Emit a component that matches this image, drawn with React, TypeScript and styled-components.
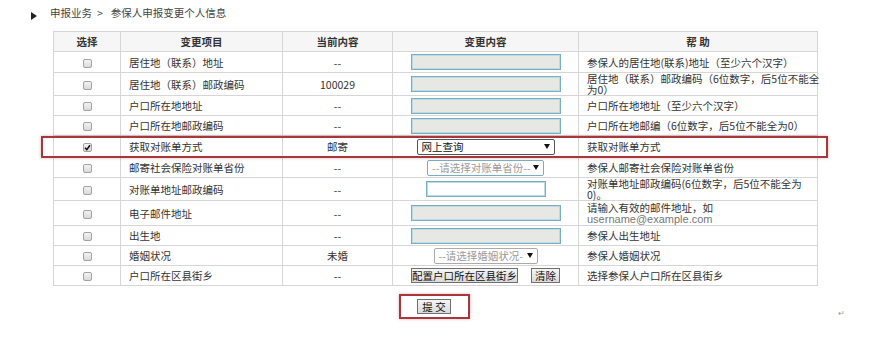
import React from "react";
import styled, { createGlobalStyle } from "styled-components";

const GlobalStyle = createGlobalStyle`
  html, body { margin: 0; padding: 0; background: #fff; }
  body { font-family: "Noto Sans CJK SC", "Noto Sans", sans-serif; color: #333; }
`;

const Page = styled.div`
  width: 871px;
  height: 337px;
  overflow: hidden;
`;

const Crumb = styled.div`
  display: flex;
  align-items: center;
  height: 14px;
  margin-top: 6px;
  padding-left: 31px;
  font-size: 10.5px;
  line-height: 14px;
  color: #444;
`;

const CrumbArrow = styled.span`
  width: 0;
  height: 0;
  border-left: 6px solid #222;
  border-top: 4px solid transparent;
  border-bottom: 4px solid transparent;
  margin: 6px 13px 0 0;
`;

const CrumbSep = styled.span`
  margin: 0 8px 0 5px;
`;

const TableWrap = styled.div`
  position: relative;
  margin: 11px 0 0 53px;
  width: 764px;
`;

const Table = styled.table`
  border-collapse: collapse;
  width: 764px;
  table-layout: fixed;
  font-size: 10.5px;
  line-height: 11px;
  color: #333;
`;

const Th = styled.th`
  height: 19px;
  padding: 0;
  border: 1px solid #d6d6d6;
  background: #f6f6f6;
  font-weight: bold;
  color: #333;
  text-align: center;
  white-space: pre;
`;

const Tr = styled.tr<{ $h: number }>`
  height: ${(p) => p.$h}px;
`;

const Td = styled.td<{ $align?: "left" | "center" }>`
  border: 1px solid #d6d6d6;
  padding: 0 0 0 ${(p) => (p.$align === "left" ? 8 : 0)}px;
  text-align: ${(p) => p.$align || "center"};
  vertical-align: middle;
  white-space: nowrap;
`;

const ControlCell = styled.div<{ $gap?: number }>`
  display: flex;
  justify-content: center;
  align-items: center;
  gap: ${(p) => p.$gap || 0}px;
`;

const Box = styled.span`
  display: inline-flex;
  align-items: center;
  justify-content: center;
  width: 9px;
  height: 9px;
  box-sizing: border-box;
  border: 1px solid #a2a2a2;
  border-radius: 2px;
  background: linear-gradient(#f3f3f3, #d9d9d9);
  vertical-align: middle;
`;

const TextInput = styled.span<{ $w: number; $white?: boolean }>`
  display: inline-block;
  width: ${(p) => p.$w}px;
  height: 16px;
  box-sizing: border-box;
  border: 1px solid #79aec0;
  box-shadow: inset 0 0 0 1px #bddbe4;
  background: ${(p) => (p.$white ? "#fff" : "#e7e7e3")};
`;

const FakeSelect = styled.span<{ $w: number; $border: string; $color: string }>`
  display: inline-flex;
  align-items: center;
  justify-content: space-between;
  width: ${(p) => p.$w}px;
  height: 16px;
  box-sizing: border-box;
  padding: 0 4px 0 4px;
  border: 1px solid ${(p) => p.$border};
  border-radius: 2px;
  background: #fff;
  color: ${(p) => p.$color};
  font-size: 10.5px;
  line-height: 14px;
`;

const Arrow = styled.span`
  width: 0;
  height: 0;
  border-top: 5px solid #111;
  border-left: 3px solid transparent;
  border-right: 3px solid transparent;
`;

const Btn = styled.span<{ $w: number }>`
  display: inline-flex;
  align-items: center;
  justify-content: center;
  width: ${(p) => p.$w}px;
  height: 15px;
  box-sizing: border-box;
  border: 1px solid #6f6f6f;
  background: linear-gradient(#f5f5f5, #dadada);
  color: #111;
  font-size: 10.5px;
  line-height: 13px;
  white-space: pre;
`;

const Mail = styled.span`
  font-family: "Liberation Sans", Arial, sans-serif;
  color: #777;
  font-size: 11px;
`;

const Highlight = styled.div`
  position: absolute;
  left: -12px;
  top: 105px;
  width: 787px;
  height: 22px;
  box-sizing: border-box;
  border: 2px solid #a8363a;
  box-shadow: 0 0 3px rgba(140, 40, 40, 0.35);
  pointer-events: none;
`;

const SubmitRow = styled.div`
  display: grid;
  grid-template-columns: 53px 764px 1fr;
  margin-top: 8px;
  align-items: center;
`;

const SubmitBox = styled.div`
  grid-column: 2;
  justify-self: center;
  display: flex;
  padding: 3px 17px 3px 16px;
  border: 2px solid #a8363a;
  box-shadow: 0 0 3px rgba(140, 40, 40, 0.35);
  margin-left: -1px;
`;

const Mark = styled.span`
  grid-column: 3;
  padding-left: 21px;
  font-size: 8px;
  color: #999;
  margin-top: 12px;
`;

const Check = ({ checked }: { checked?: boolean }) => (
  <Box>
    {checked && (
      <svg width="7" height="7" viewBox="0 0 7 7">
        <path d="M1 3.8 L2.8 5.6 L6 1.2" stroke="#111" strokeWidth="1.6" fill="none" />
      </svg>
    )}
  </Box>
);

type Row = {
  item: string;
  current: string;
  control: React.ReactNode;
  help: React.ReactNode;
  h: number;
  checked?: boolean;
};

const rows: Row[] = [
  {
    item: "居住地（联系）地址",
    current: "--",
    control: <TextInput $w={150} />,
    help: "参保人的居住地(联系)地址（至少六个汉字）",
    h: 21,
  },
  {
    item: "居住地（联系）邮政编码",
    current: "100029",
    control: <TextInput $w={150} />,
    help: (
      <>
        居住地（联系）邮政编码（6位数字，后5位不能全
        <br />
        为0）
      </>
    ),
    h: 23,
  },
  {
    item: "户口所在地地址",
    current: "--",
    control: <TextInput $w={150} />,
    help: "户口所在地地址（至少六个汉字）",
    h: 20,
  },
  {
    item: "户口所在地邮政编码",
    current: "--",
    control: <TextInput $w={150} />,
    help: "户口所在地邮编（6位数字，后5位不能全为0）",
    h: 20,
  },
  {
    item: "获取对账单方式",
    current: "邮寄",
    control: (
      <FakeSelect $w={138} $border="#555" $color="#111">
        网上查询
        <Arrow />
      </FakeSelect>
    ),
    help: "获取对账单方式",
    h: 22,
    checked: true,
  },
  {
    item: "邮寄社会保险对账单省份",
    current: "--",
    control: (
      <FakeSelect $w={117} $border="#79aec0" $color="#999">
        --请选择对账单省份--
        <Arrow />
      </FakeSelect>
    ),
    help: "参保人邮寄社会保险对账单省份",
    h: 20,
  },
  {
    item: "对账单地址邮政编码",
    current: "--",
    control: <TextInput $w={120} $white />,
    help: (
      <>
        对账单地址邮政编码(6位数字，后5位不能全为
        <br />
        0)。
      </>
    ),
    h: 23,
  },
  {
    item: "电子邮件地址",
    current: "--",
    control: <TextInput $w={150} />,
    help: (
      <>
        请输入有效的邮件地址，如
        <br />
        <Mail>username@example.com</Mail>
      </>
    ),
    h: 25,
  },
  {
    item: "出生地",
    current: "--",
    control: <TextInput $w={150} />,
    help: "参保人出生地址",
    h: 20,
  },
  {
    item: "婚姻状况",
    current: "未婚",
    control: (
      <FakeSelect $w={104} $border="#aaa" $color="#999">
        --请选择婚姻状况-
        <Arrow />
      </FakeSelect>
    ),
    help: "参保人婚姻状况",
    h: 20,
  },
  {
    item: "户口所在区县街乡",
    current: "--",
    control: (
      <>
        <Btn $w={107}>配置户口所在区县街乡</Btn>
        <Btn $w={29}>清除</Btn>
      </>
    ),
    help: "选择参保人户口所在区县街乡",
    h: 20,
  },
];

export default function App() {
  return (
    <Page>
      <GlobalStyle />
      <Crumb>
        <CrumbArrow />
        申报业务
        <CrumbSep>&gt;</CrumbSep>
        参保人申报变更个人信息
      </Crumb>
      <TableWrap>
        <Table>
          <colgroup>
            <col style={{ width: 67 }} />
            <col style={{ width: 162 }} />
            <col style={{ width: 110 }} />
            <col style={{ width: 186 }} />
            <col style={{ width: 239 }} />
          </colgroup>
          <thead>
            <tr>
              <Th>选择</Th>
              <Th>变更项目</Th>
              <Th>当前内容</Th>
              <Th>变更内容</Th>
              <Th>帮 助</Th>
            </tr>
          </thead>
          <tbody>
            {rows.map((r) => (
              <Tr key={r.item} $h={r.h}>
                <Td>
                  <Check checked={r.checked} />
                </Td>
                <Td $align="left">{r.item}</Td>
                <Td>{r.current}</Td>
                <Td>
                  <ControlCell $gap={13}>{r.control}</ControlCell>
                </Td>
                <Td $align="left">{r.help}</Td>
              </Tr>
            ))}
          </tbody>
        </Table>
        <Highlight />
      </TableWrap>
      <SubmitRow>
        <SubmitBox>
          <Btn $w={34}>提 交</Btn>
        </SubmitBox>
        <Mark>↵</Mark>
      </SubmitRow>
    </Page>
  );
}
